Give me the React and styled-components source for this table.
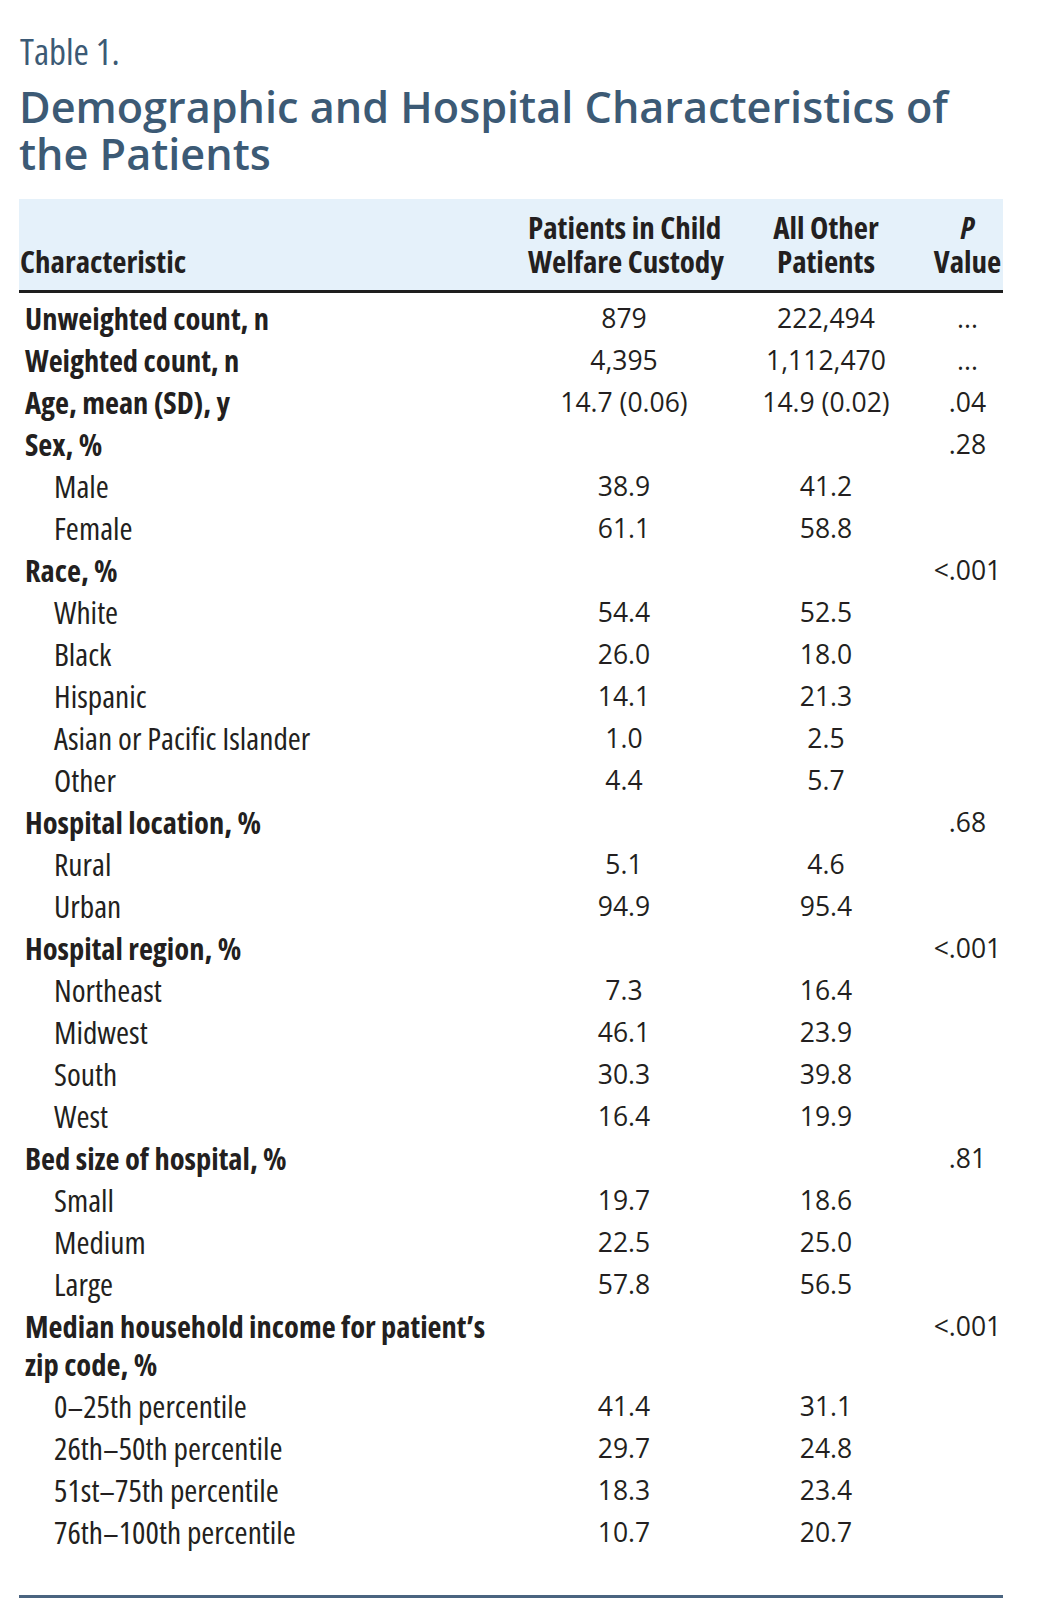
import React from "react";
import styled, { createGlobalStyle } from "styled-components";

const GlobalStyle = createGlobalStyle`
  html, body { margin: 0; padding: 0; background: #ffffff; }
  * { box-sizing: border-box; }
`;

const NARROW = `"Open Sans", "Noto Sans", sans-serif`;
const NUM = `"Open Sans", "Liberation Sans", sans-serif`;
const COLS = "509px 192px 212px 71px";

const Page = styled.div`
  width: 1040px;
  padding: 31px 37px 22px 19px;
`;

const TableLabel = styled.div`
  font-family: ${NARROW};
  font-stretch: 75%;
  font-size: 37px;
  line-height: 40px;
  color: #3c5a75;
  padding-left: 1px;
`;

const Title = styled.h1`
  margin: 12px 0 22px;
  font-family: "Open Sans", "Lato", sans-serif;
  font-weight: 620;
  font-size: 43.2px;
  line-height: 47px;
  color: #3c5a75;
`;

const Head = styled.div`
  display: grid;
  grid-template-columns: ${COLS};
  align-items: end;
  background: #e5f1fa;
  padding: 11px 0 12px;
  border-bottom: 3px solid #1e1e1e;
`;

const Th = styled.div`
  font-family: ${NARROW};
  font-stretch: 75%;
  font-weight: 700;
  font-size: 31px;
  line-height: 34px;
  color: #231f20;
  text-align: ${(p) => (p.$left ? "left" : "center")};
  padding-left: ${(p) => (p.$left ? "1px" : "0")};
  white-space: nowrap;
`;

const Italic = styled.span`
  font-style: italic;
`;

const Body = styled.div`
  padding: 4px 0 42px;
  border-bottom: 3px solid #4a6480;
`;

const Row = styled.div`
  display: grid;
  grid-template-columns: ${COLS};
  align-items: start;
  padding: 2px 0;
`;

const Label = styled.div`
  font-family: ${NARROW};
  font-stretch: 75%;
  font-weight: ${(p) => (p.$bold ? 700 : 400)};
  font-size: ${(p) => (p.$bold ? "30.5px" : "31.5px")};
  line-height: 38px;
  color: #231f20;
  padding-left: ${(p) => (p.$bold ? "6px" : "35px")};
  padding-right: 24px;
`;

const Num = styled.div`
  font-family: ${NUM};
  font-size: 26.5px;
  line-height: 38px;
  color: #231f20;
  text-align: center;
  white-space: nowrap;
`;

const rows = [
  { l: "Unweighted count, n", b: true, a: "879", c: "222,494", p: "..." },
  { l: "Weighted count, n", b: true, a: "4,395", c: "1,112,470", p: "..." },
  { l: "Age, mean (SD), y", b: true, a: "14.7 (0.06)", c: "14.9 (0.02)", p: ".04" },
  { l: "Sex, %", b: true, p: ".28" },
  { l: "Male", a: "38.9", c: "41.2" },
  { l: "Female", a: "61.1", c: "58.8" },
  { l: "Race, %", b: true, p: "<.001" },
  { l: "White", a: "54.4", c: "52.5" },
  { l: "Black", a: "26.0", c: "18.0" },
  { l: "Hispanic", a: "14.1", c: "21.3" },
  { l: "Asian or Pacific Islander", a: "1.0", c: "2.5" },
  { l: "Other", a: "4.4", c: "5.7" },
  { l: "Hospital location, %", b: true, p: ".68" },
  { l: "Rural", a: "5.1", c: "4.6" },
  { l: "Urban", a: "94.9", c: "95.4" },
  { l: "Hospital region, %", b: true, p: "<.001" },
  { l: "Northeast", a: "7.3", c: "16.4" },
  { l: "Midwest", a: "46.1", c: "23.9" },
  { l: "South", a: "30.3", c: "39.8" },
  { l: "West", a: "16.4", c: "19.9" },
  { l: "Bed size of hospital, %", b: true, p: ".81" },
  { l: "Small", a: "19.7", c: "18.6" },
  { l: "Medium", a: "22.5", c: "25.0" },
  { l: "Large", a: "57.8", c: "56.5" },
  { l: "Median household income for patient\u2019s zip code, %", b: true, p: "<.001" },
  { l: "0\u201325th percentile", a: "41.4", c: "31.1" },
  { l: "26th\u201350th percentile", a: "29.7", c: "24.8" },
  { l: "51st\u201375th percentile", a: "18.3", c: "23.4" },
  { l: "76th\u2013100th percentile", a: "10.7", c: "20.7" },
];

export default function App() {
  return (
    <Page>
      <GlobalStyle />
      <TableLabel>Table 1.</TableLabel>
      <Title>
        Demographic and Hospital Characteristics of
        <br />
        the Patients
      </Title>
      <Head>
        <Th $left>Characteristic</Th>
        <Th>
          Patients in Child
          <br />
          Welfare Custody
        </Th>
        <Th>
          All Other
          <br />
          Patients
        </Th>
        <Th>
          <Italic>P</Italic>
          <br />
          Value
        </Th>
      </Head>
      <Body>
        {rows.map((r) => (
          <Row key={r.l}>
            <Label $bold={r.b}>{r.l}</Label>
            <Num>{r.a || ""}</Num>
            <Num>{r.c || ""}</Num>
            <Num>{r.p || ""}</Num>
          </Row>
        ))}
      </Body>
    </Page>
  );
}
